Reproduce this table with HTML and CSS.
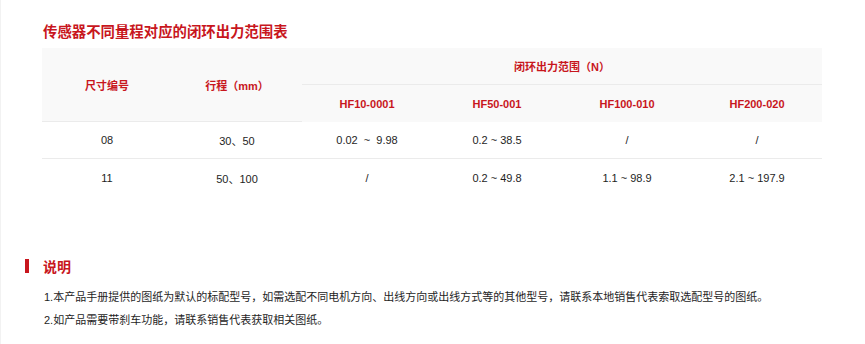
FILE: index.html
```html
<!DOCTYPE html>
<html lang="zh-CN">
<head>
<meta charset="utf-8">
<title>传感器不同量程对应的闭环出力范围表</title>
<link rel="stylesheet" href="styles.css">
</head>
<body>
<div class="wrap">
  <h2 class="title">传感器不同量程对应的闭环出力范围表</h2>
  <div class="grid">
    <div class="th span2">尺寸编号</div>
    <div class="th span2">行程（mm）</div>
    <div class="th group">闭环出力范围（N）</div>
    <div class="th code">HF10-0001</div>
    <div class="th code">HF50-001</div>
    <div class="th code">HF100-010</div>
    <div class="th code">HF200-020</div>

    <div class="td line">08</div>
    <div class="td line">30、50</div>
    <div class="td line">0.02&nbsp;&nbsp;~&nbsp;&nbsp;9.98</div>
    <div class="td line">0.2 ~ 38.5</div>
    <div class="td line">/</div>
    <div class="td line">/</div>

    <div class="td">11</div>
    <div class="td">50、100</div>
    <div class="td">/</div>
    <div class="td">0.2 ~ 49.8</div>
    <div class="td">1.1 ~ 98.9</div>
    <div class="td">2.1 ~ 197.9</div>
  </div>

  <h3 class="note-title"><span class="bar"></span>说明</h3>
  <div class="note">
    <p>1.本产品手册提供的图纸为默认的标配型号，如需选配不同电机方向、出线方向或出线方式等的其他型号，请联系本地销售代表索取选配型号的图纸。</p>
    <p>2.如产品需要带刹车功能，请联系销售代表获取相关图纸。</p>
  </div>
</div>
</body>
</html>
```

FILE: styles.css
```css
html, body {
  margin: 0;
  padding: 0;
  background: #fff;
}
body {
  font-family: "Liberation Sans", Arial, "Noto Sans CJK SC", sans-serif;
  font-size: 11px;
  color: #1e1e1e;
  border-left: 1px solid #f2f2f2;
  min-height: 344px;
  box-sizing: border-box;
}
.wrap {
  padding: 21px 0 0 24px;
}
.title {
  margin: 0 0 7px 18px;
  font-family: "Noto Sans CJK SC", sans-serif;
  font-size: 14.4px;
  line-height: 20px;
  font-weight: 700;
  color: #c8161d;
}
.grid {
  margin-left: 17px;
  width: 780px;
  display: grid;
  grid-template-columns: repeat(6, 130px);
  grid-template-rows: repeat(4, 37px);
}
.th, .td {
  display: flex;
  align-items: center;
  justify-content: center;
  box-sizing: border-box;
  white-space: nowrap;
}
.th {
  background: #f9f9f9;
  color: #c8161d;
  font-weight: 700;
}
.span2 {
  grid-row: span 2;
  border-bottom: 1px solid #ebebeb;
}
.group {
  grid-column: span 4;
  border-bottom: 1px solid #ebebeb;
}
.line {
  border-bottom: 1px solid #ebebeb;
}
.note-title {
  display: flex;
  align-items: center;
  gap: 14px;
  margin: 60px 0 10px 0;
  font-family: "Noto Sans CJK SC", sans-serif;
  font-size: 14px;
  line-height: 20px;
  font-weight: 700;
  color: #c8161d;
}
.bar {
  width: 4px;
  height: 14px;
  background: #c8161d;
}
.note {
  padding-left: 19px;
}
.note p {
  margin: 0;
  line-height: 23px;
}
```
